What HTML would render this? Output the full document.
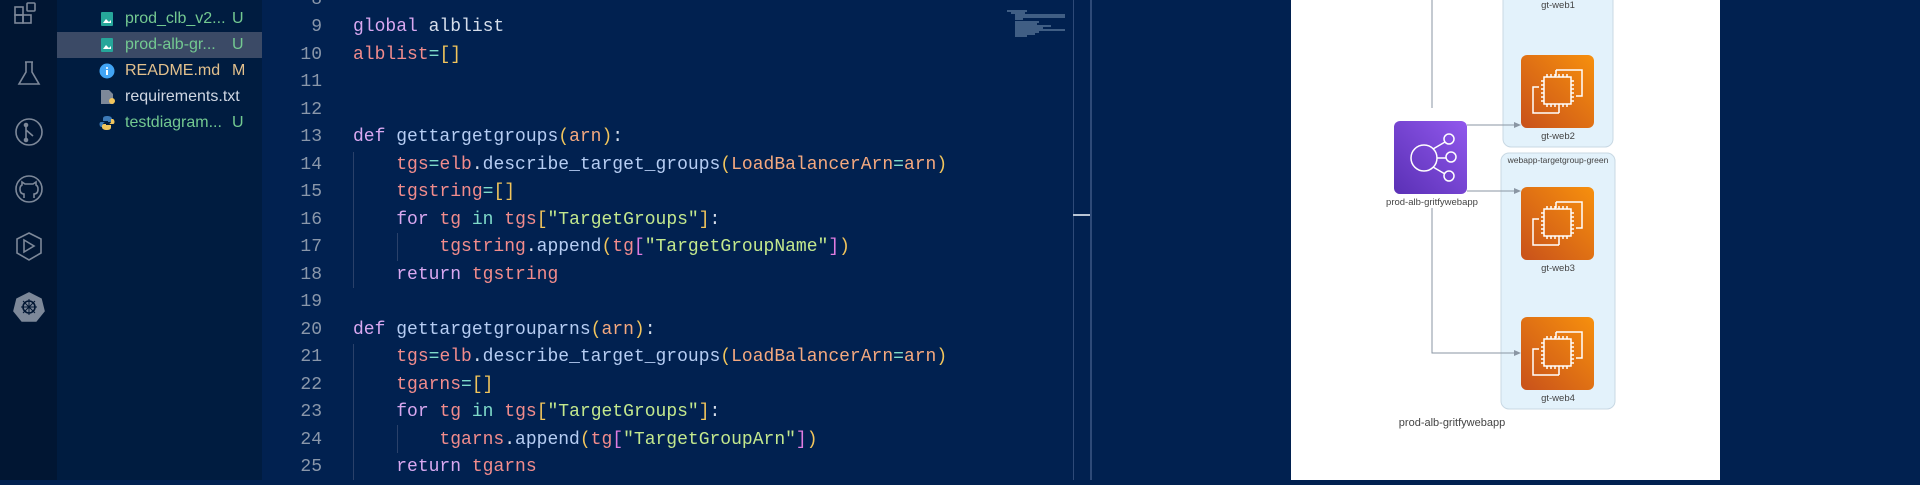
<!DOCTYPE html>
<html><head><style>
*{margin:0;padding:0;box-sizing:border-box}
body{width:1920px;height:480px;overflow:hidden;background:#012150;position:relative;font-family:"Liberation Sans",sans-serif}
.abs{position:absolute}
#act{left:0;top:0;width:57px;height:480px;background:#011633}
#side{left:57px;top:0;width:205px;height:480px;background:#001c40}
.f{position:absolute;left:0;width:205px;height:26px;font-size:16px;line-height:26px}
.f .n{position:absolute;left:68px}
.f .s{position:absolute;left:175px}
.code{position:absolute;left:262px;top:14px;font-family:"Liberation Mono",monospace;font-size:18px;line-height:27.5px;color:#d6deeb;white-space:pre}
.ln{position:absolute;left:262px;width:60px;text-align:right;color:#8a97aa}
.k{color:#d9a8f0}.v{color:#f28c8c}.fn{color:#b6cdf3}.p{color:#f2c55c}.o{color:#7fdbca}.s2{color:#c3e88d}.a{color:#f5a97f}.m{color:#e07ce0}
.guide{position:absolute;width:1px;background:#2a416a}
</style></head><body>
<div id="act" class="abs">
<svg width="57" height="480" fill="none" stroke="#7d8899" stroke-width="1.6">
<rect x="15" y="7" width="8" height="8"/><rect x="15" y="15" width="8" height="8"/><rect x="23" y="15" width="8" height="8"/><rect x="27" y="3" width="8" height="8" rx="1"/>
<path d="M25 62h8M26 62v10l-7 12h20l-7-12V62"/>
<circle cx="29" cy="132" r="13"/><path d="M26 124v16M26 130l7 6"/><circle cx="26" cy="125" r="1.5" fill="#7d8899"/><circle cx="26" cy="140" r="1.5" fill="#7d8899"/>
<circle cx="29" cy="189" r="13"/><path d="M24 198v-4q-4 0-4-5q0-3 2-4l0-3 3 2h8l3-2 0 3q2 1 2 4q0 5-4 5v4"/>
<path d="M29 233l12 6v14l-12 7-12-7v-14z"/><path d="M24 240v12l10-6z"/>
<path d="M29 293l12 6 3 12-8 10h-14l-8-10 3-12z" fill="#7d8899"/><circle cx="29" cy="307" r="6" stroke="#011633"/><path d="M29 299v16M21 307h16M23 301l12 12M35 301l-12 12" stroke="#011633" stroke-width="1"/>
</svg></div>
<div id="side" class="abs">
<div class="f" style="top:6px;color:#73c991"><svg class="abs" style="left:43px;top:5px" width="14" height="16"><rect x="1" y="1" width="12" height="14" rx="1" fill="#26a69a"/><path d="M3 12l3-4 3 3 2-2v3z" fill="#fff"/></svg><span class="n">prod_clb_v2...</span><span class="s">U</span></div>
<div class="f" style="top:32px;background:#3b4a66;color:#73c991"><svg class="abs" style="left:43px;top:5px" width="14" height="16"><rect x="1" y="1" width="12" height="14" rx="1" fill="#26a69a"/><path d="M3 12l3-4 3 3 2-2v3z" fill="#fff"/></svg><span class="n">prod-alb-gr...</span><span class="s">U</span></div>
<div class="f" style="top:58px;color:#e2c08d"><svg class="abs" style="left:42px;top:5px" width="16" height="16"><circle cx="8" cy="8" r="7.5" fill="#42a5f5"/><rect x="7" y="7" width="2" height="5" fill="#fff"/><circle cx="8" cy="5" r="1" fill="#fff"/></svg><span class="n">README.md</span><span class="s">M</span></div>
<div class="f" style="top:84px;color:#cfd6e2"><svg class="abs" style="left:43px;top:5px" width="16" height="16"><path d="M1 1h8l4 4v10H1z" fill="#7d8899"/><circle cx="12" cy="12" r="3" fill="#f2c55c"/></svg><span class="n">requirements.txt</span></div>
<div class="f" style="top:110px;color:#73c991"><svg class="abs" style="left:42px;top:5px" width="16" height="16"><path d="M8 1c-4 0-4 2-4 3v2h5v1H2c-2 0-2 4 0 5h2v-2c0-2 1-3 3-3h4c1 0 2-1 2-2V4c0-2-2-3-5-3z" fill="#3d7ab7"/><path d="M8 15c4 0 4-2 4-3v-2H7V9h7c2 0 2-4 0-5h-2v2c0 2-1 3-3 3H5c-1 0-2 1-2 2v1c0 2 2 3 5 3z" fill="#f2c55c"/></svg><span class="n">testdiagram...</span><span class="s">U</span></div>
</div>
<div class="guide" style="left:353px;top:152px;height:136px"></div>
<div class="guide" style="left:397px;top:233px;height:28px"></div>
<div class="guide" style="left:353px;top:344px;height:136px"></div>
<div class="guide" style="left:397px;top:425px;height:28px"></div>
<div class="ln code" style="top:-13.5px">8
9
10
11
12
13
14
15
16
17
18
19
20
21
22
23
24
25</div>
<div class="code" style="left:353px"><span class="k">global</span> alblist
<span class="v">alblist</span><span class="o">=</span><span class="p">[]</span>


<span class="k">def</span> <span class="fn">gettargetgroups</span><span class="p">(</span><span class="a">arn</span><span class="p">)</span>:
    <span class="v">tgs</span><span class="o">=</span><span class="v">elb</span>.<span class="fn">describe_target_groups</span><span class="p">(</span><span class="a">LoadBalancerArn</span><span class="o">=</span><span class="a">arn</span><span class="p">)</span>
    <span class="v">tgstring</span><span class="o">=</span><span class="p">[]</span>
    <span class="k">for</span> <span class="v">tg</span> <span class="o">in</span> <span class="v">tgs</span><span class="p">[</span><span class="s2">"TargetGroups"</span><span class="p">]</span>:
        <span class="v">tgstring</span>.<span class="fn">append</span><span class="p">(</span><span class="v">tg</span><span class="m">[</span><span class="s2">"TargetGroupName"</span><span class="m">]</span><span class="p">)</span>
    <span class="k">return</span> <span class="v">tgstring</span>

<span class="k">def</span> <span class="fn">gettargetgrouparns</span><span class="p">(</span><span class="a">arn</span><span class="p">)</span>:
    <span class="v">tgs</span><span class="o">=</span><span class="v">elb</span>.<span class="fn">describe_target_groups</span><span class="p">(</span><span class="a">LoadBalancerArn</span><span class="o">=</span><span class="a">arn</span><span class="p">)</span>
    <span class="v">tgarns</span><span class="o">=</span><span class="p">[]</span>
    <span class="k">for</span> <span class="v">tg</span> <span class="o">in</span> <span class="v">tgs</span><span class="p">[</span><span class="s2">"TargetGroups"</span><span class="p">]</span>:
        <span class="v">tgarns</span>.<span class="fn">append</span><span class="p">(</span><span class="v">tg</span><span class="m">[</span><span class="s2">"TargetGroupArn"</span><span class="m">]</span><span class="p">)</span>
    <span class="k">return</span> <span class="v">tgarns</span></div>
<svg class="abs" style="left:1005px;top:8px" width="70" height="30"><g stroke-width="1"><path d="M2 3h20M6 5h14M10 7h50M10 9h50M10 11h8M10 14h24M10 16h22M10 18h36M10 20h28M10 22h50M10 24h24M10 26h20M10 28h12" stroke="#7f9ab8"/></g></svg>
<div class="abs" style="left:1073px;top:0;width:1px;height:480px;background:#2e4a78"></div>
<div class="abs" style="left:1090px;top:0;width:2px;height:480px;background:#2e4a78"></div>
<div class="abs" style="left:1073px;top:214px;width:17px;height:2px;background:#b8c4d4"></div>
<div class="abs" style="left:1291px;top:0;width:429px;height:480px;background:#fff"></div>
<svg class="abs" style="left:1291px;top:0" width="429" height="480" font-family="Liberation Sans,sans-serif" font-size="9.5" fill="#444">
<defs><linearGradient id="og" x1="0" y1="1" x2="1" y2="0"><stop offset="0" stop-color="#c8511b"/><stop offset="1" stop-color="#f7900d"/></linearGradient>
<linearGradient id="pg" x1="0" y1="1" x2="1" y2="0"><stop offset="0" stop-color="#5a30b5"/><stop offset="1" stop-color="#9158ed"/></linearGradient>
<g id="ec2"><rect width="73" height="73" rx="6" fill="url(#og)"/><g fill="none" stroke="#fff" stroke-width="1.5"><path d="M35 15h26v26h-6M35 15v6"/><path d="M38 58H12V32h6M38 58v-6"/><rect x="23" y="22" width="27" height="27"/><path d="M26 19v3M30 19v3M34 19v3M38 19v3M42 19v3M46 19v3M26 49v3M30 49v3M34 49v3M38 49v3M42 49v3M46 49v3M20 26h3M20 30h3M20 34h3M20 38h3M20 42h3M20 46h3M50 26h3M50 30h3M50 34h3M50 38h3M50 42h3M50 46h3"/></g></g></defs>
<rect x="212" y="-10" width="110" height="157" rx="8" fill="#e3f2fb" stroke="#c8d8e3"/>
<rect x="210" y="153" width="114" height="256" rx="8" fill="#e3f2fb" stroke="#c8d8e3"/>
<text x="267" y="163" text-anchor="middle" font-size="8.5">webapp-targetgroup-green</text>
<use href="#ec2" x="230" y="55"/><use href="#ec2" x="230" y="187"/><use href="#ec2" x="230" y="317"/>
<text x="267" y="8" text-anchor="middle">gt-web1</text><text x="267" y="139" text-anchor="middle">gt-web2</text><text x="267" y="271" text-anchor="middle">gt-web3</text><text x="267" y="401" text-anchor="middle">gt-web4</text>
<g stroke="#8a96a3" fill="none"><path d="M141 0v108M141 208v145h85M176 125h50M176 191h50"/></g>
<g fill="#8a96a3"><path d="M230 125l-7-3v6zM230 191l-7-3v6zM230 353l-7-3v6z"/></g>
<rect x="103" y="121" width="73" height="73" rx="6" fill="url(#pg)"/>
<g fill="none" stroke="#fff" stroke-width="1.5"><circle cx="133" cy="158" r="13"/><circle cx="158" cy="139" r="5"/><circle cx="160" cy="157" r="5"/><circle cx="158" cy="176" r="5"/><path d="M146 158h9M142 149l12-7M142 167l12 7"/></g>
<text x="141" y="205" text-anchor="middle">prod-alb-gritfywebapp</text>
<text x="161" y="426" text-anchor="middle" font-size="11">prod-alb-gritfywebapp</text>
</svg>
</body></html>
